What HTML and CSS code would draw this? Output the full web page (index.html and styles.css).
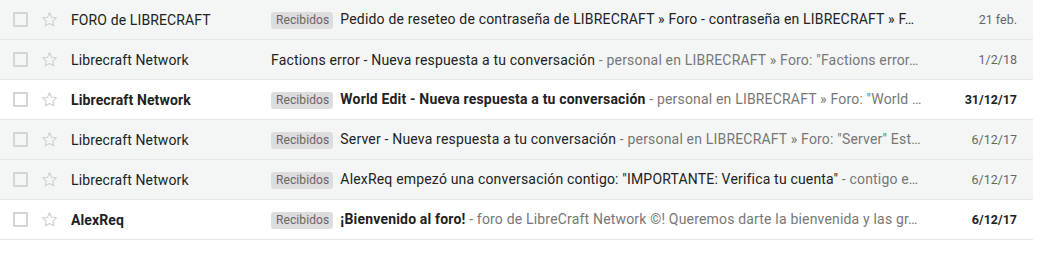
FILE: index.html
```html
<!DOCTYPE html>
<html lang="es">
<head>
<meta charset="utf-8">
<link rel="stylesheet" href="styles.css">
</head>
<body>
<div class="list">
  <div class="row read">
    <span class="cb"></span>
    <svg class="star" viewBox="0 0 24 24"><path d="M12 3.5l2.6 5.6 6.1.7-4.5 4.2 1.2 6-5.4-3-5.4 3 1.2-6-4.5-4.2 6.1-.7z"/></svg>
    <span class="sender">FORO de LIBRECRAFT</span>
    <span class="subject"><span class="label">Recibidos</span><span class="subj">Pedido de reseteo de contraseña de LIBRECRAFT » Foro - contraseña en LIBRECRAFT » F…</span></span>
    <span class="date">21 feb.</span>
  </div>
  <div class="row read">
    <span class="cb"></span>
    <svg class="star" viewBox="0 0 24 24"><path d="M12 3.5l2.6 5.6 6.1.7-4.5 4.2 1.2 6-5.4-3-5.4 3 1.2-6-4.5-4.2 6.1-.7z"/></svg>
    <span class="sender">Librecraft Network</span>
    <span class="subject"><span class="subj">Factions error - Nueva respuesta a tu conversación</span><span class="snip"> - personal en LIBRECRAFT » Foro: "Factions error…</span></span>
    <span class="date">1/2/18</span>
  </div>
  <div class="row unread">
    <span class="cb"></span>
    <svg class="star" viewBox="0 0 24 24"><path d="M12 3.5l2.6 5.6 6.1.7-4.5 4.2 1.2 6-5.4-3-5.4 3 1.2-6-4.5-4.2 6.1-.7z"/></svg>
    <span class="sender">Librecraft Network</span>
    <span class="subject"><span class="label">Recibidos</span><span class="subj">World Edit - Nueva respuesta a tu conversación</span><span class="snip"> - personal en LIBRECRAFT » Foro: "World …</span></span>
    <span class="date">31/12/17</span>
  </div>
  <div class="row read">
    <span class="cb"></span>
    <svg class="star" viewBox="0 0 24 24"><path d="M12 3.5l2.6 5.6 6.1.7-4.5 4.2 1.2 6-5.4-3-5.4 3 1.2-6-4.5-4.2 6.1-.7z"/></svg>
    <span class="sender">Librecraft Network</span>
    <span class="subject"><span class="label">Recibidos</span><span class="subj">Server - Nueva respuesta a tu conversación</span><span class="snip"> - personal en LIBRECRAFT » Foro: "Server" Est…</span></span>
    <span class="date">6/12/17</span>
  </div>
  <div class="row read">
    <span class="cb"></span>
    <svg class="star" viewBox="0 0 24 24"><path d="M12 3.5l2.6 5.6 6.1.7-4.5 4.2 1.2 6-5.4-3-5.4 3 1.2-6-4.5-4.2 6.1-.7z"/></svg>
    <span class="sender">Librecraft Network</span>
    <span class="subject"><span class="label">Recibidos</span><span class="subj">AlexReq empezó una conversación contigo: "IMPORTANTE: Verifica tu cuenta"</span><span class="snip"> - contigo e…</span></span>
    <span class="date">6/12/17</span>
  </div>
  <div class="row unread">
    <span class="cb"></span>
    <svg class="star" viewBox="0 0 24 24"><path d="M12 3.5l2.6 5.6 6.1.7-4.5 4.2 1.2 6-5.4-3-5.4 3 1.2-6-4.5-4.2 6.1-.7z"/></svg>
    <span class="sender">AlexReq</span>
    <span class="subject"><span class="label">Recibidos</span><span class="subj">¡Bienvenido al foro!</span><span class="snip"> - foro de LibreCraft Network ©! Queremos darte la bienvenida y las gr…</span></span>
    <span class="date">6/12/17</span>
  </div>
</div>
</body>
</html>
```

FILE: styles.css
```css
* { box-sizing: border-box; }
html, body { margin: 0; padding: 0; background: #fff; }
body { font-family: Roboto, "Liberation Sans", Arial, sans-serif; font-size: 14px; color: #222; }
.list { width: 1033px; }
.row {
  display: flex;
  align-items: center;
  height: 40px;
  border-bottom: 1px solid #e6e6e6;
  white-space: nowrap;
}
.row.read { background: #f4f6f6; }
.row.unread { background: #fff; }
.cb {
  flex: none;
  width: 15px;
  height: 15px;
  margin-left: 13px;
  border: 2px solid #d4d4d4;
  border-radius: 1px;
  background: transparent;
}
.star {
  flex: none;
  width: 19px;
  height: 19px;
  margin-left: 12px;
  fill: none;
  stroke: #cfcfcf;
  stroke-width: 1.4;
  stroke-linejoin: round;
}
.sender {
  flex: none;
  width: 200px;
  margin-left: 12px;
  overflow: hidden;
  text-overflow: ellipsis;
  color: #222;
  letter-spacing: 0.12px;
}
.subject {
  flex: none;
  width: 652px;
  overflow: hidden;
  text-overflow: ellipsis;
  color: #222;
  letter-spacing: 0.18px;
}
.label {
  display: inline-block;
  font-size: 12px;
  line-height: 17px;
  padding: 0 4px 0 5px;
  border-radius: 3px;
  background: #dddddd;
  color: #666;
  margin-right: 7px;
  letter-spacing: 0.1px;
  vertical-align: 0;
}
.snip { color: #777; }
.date {
  flex: 1;
  text-align: right;
  padding-right: 16px;
  font-size: 12.5px;
  color: #666;
}
.unread .sender, .unread .subj, .unread .date { font-weight: 700; color: #222; }
```
